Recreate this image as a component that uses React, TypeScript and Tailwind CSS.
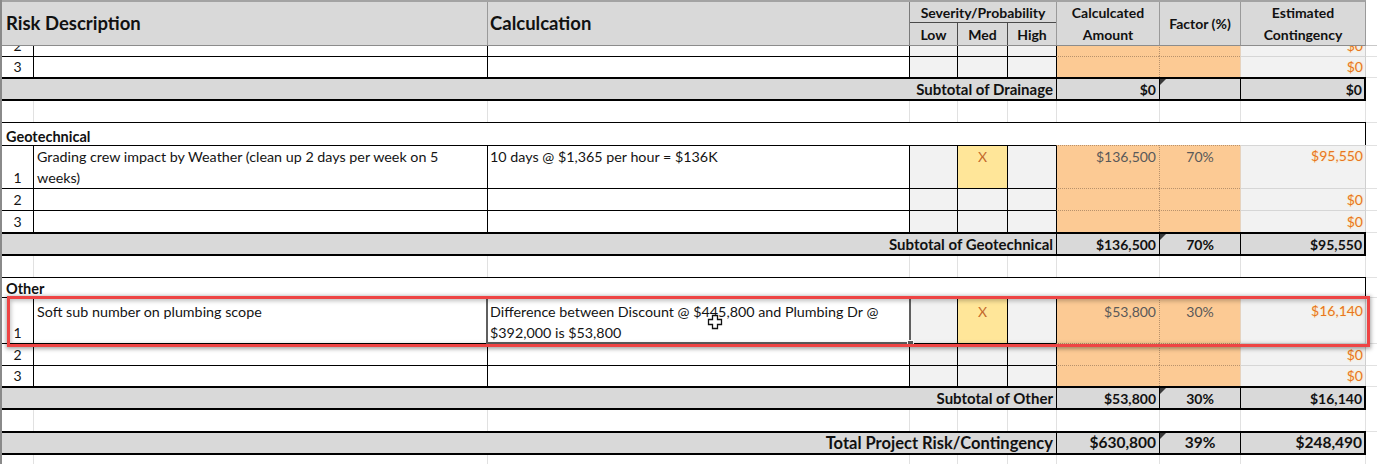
import React from "react";

function Edge() {
  return <div className="w-[2px] shrink-0 self-stretch bg-[#8a8a8a]" />;
}

function Rest({ top = true }: { top?: boolean }) {
  return <div className={`flex-1 bg-white ${top ? "border-t border-t-[#e1e1e1]" : ""}`} />;
}

type DataRowProps = {
  h: string;
  num: string;
  b?: React.ReactNode;
  c?: React.ReactNode;
  x?: boolean;
  calc?: string;
  fac?: string;
  est: string;
  pad?: string;
  noTop?: boolean;
  children?: React.ReactNode;
};

function DataRow({ h, num, b, c, x, calc, fac, est, pad, noTop, children }: DataRowProps) {
  const t = noTop ? "" : "border-t border-t-black";
  const align = pad ? `items-start ${pad}` : "items-center";
  const dotTop = noTop ? "" : "border-t border-t-[#b8926c] [border-top-style:dotted]";
  return (
    <div className={`flex ${h} shrink-0 text-[14px] leading-[21px] text-[#141414]`}>
      <Edge />
      <div className={`w-[31px] shrink-0 flex items-end justify-center bg-white ${t}`}>
        <span className="leading-[20px]">{num}</span>
      </div>
      <div className={`w-[454px] shrink-0 flex ${align} pl-[3px] bg-white border-l border-l-black ${t} whitespace-nowrap text-[14.3px]`}>
        <div>{b}</div>
      </div>
      <div className={`relative w-[422px] shrink-0 flex ${align} pl-[2px] bg-white border-l border-l-black ${t} whitespace-nowrap text-[14.3px]`}>
        <div>{c}</div>
        {children}
      </div>
      <div className={`w-[48px] shrink-0 bg-[#f2f2f2] border-l border-l-black ${t}`} />
      <div
        className={`w-[50px] shrink-0 flex justify-center ${align} ${x ? "bg-[#ffe699]" : "bg-[#f2f2f2]"} border-l border-l-black ${t} text-[#c46a2c]`}
      >
        {x ? "X" : ""}
      </div>
      <div className={`w-[49px] shrink-0 bg-[#f2f2f2] border-l border-l-black ${t}`} />
      <div className={`w-[103px] shrink-0 flex justify-end pr-[3px] ${align} bg-[#fcca94] border-l border-l-black ${dotTop} text-[#595959]`}>
        {calc}
      </div>
      <div
        className={`w-[81px] shrink-0 flex justify-center ${align} bg-[#fcca94] border-l border-l-[#b8926c] [border-left-style:dotted] ${dotTop} text-[#595959]`}
      >
        {fac}
      </div>
      <div
        className={`w-[126px] shrink-0 flex justify-end pr-[2px] ${pad ? `items-start ${pad}` : "items-end"} bg-[#f2f2f2] border-l border-l-[#e6d3bf] border-r border-r-[#cfcfcf] ${noTop ? "" : "border-t border-t-[#d6d6d6]"} text-[#e8761f] [text-shadow:0_0_2px_#ffe7a3]`}
      >
        <span className="leading-[20px]">{est}</span>
      </div>
      <Rest top={!noTop} />
    </div>
  );
}

function Tri() {
  return (
    <div className="absolute left-0 top-0 w-0 h-0 border-t-[6px] border-r-[6px] border-t-[#3a3a3a] border-r-transparent" />
  );
}

function SubRow({ label, calc, fac, est, big }: { label: string; calc: string; fac?: string; est: string; big?: boolean }) {
  const lsize = big ? "text-[16.5px]" : "text-[15px]";
  const vsize = big ? "text-[15.5px]" : "text-[14px]";
  return (
    <div className={`flex h-[24px] shrink-0 font-bold text-[#111]`}>
      <Edge />
      <div className={`w-[1054px] shrink-0 flex items-center justify-end pr-[3px] bg-[#d9d9d9] border-y-2 border-y-black ${lsize}`}>
        {label}
      </div>
      <div className={`w-[103px] shrink-0 flex items-center justify-end pr-[3px] bg-[#d9d9d9] border-y-2 border-y-black border-l border-l-black ${vsize}`}>
        {calc}
      </div>
      <div className={`relative w-[81px] shrink-0 flex items-center justify-center bg-[#d9d9d9] border-y-2 border-y-black border-l border-l-black ${vsize}`}>
        {fac}
        <Tri />
      </div>
      <div className={`w-[126px] shrink-0 flex items-center justify-end pr-[2px] bg-[#d9d9d9] border-y-2 border-y-black border-l border-l-black border-r-2 border-r-black ${vsize}`}>
        {est}
      </div>
      <Rest />
    </div>
  );
}

function Heading({ h, label }: { h: string; label: string }) {
  return (
    <div className={`flex ${h} shrink-0`}>
      <Edge />
      <div className="w-[1364px] shrink-0 flex items-end pl-[4px] bg-white border-t border-t-black border-r border-r-black font-bold text-[14.5px] leading-[16px] text-[#111]">
        {label}
      </div>
      <Rest />
    </div>
  );
}

function Blank({ h }: { h: string }) {
  const g = "border-l border-l-[#e1e1e1]";
  return (
    <div className={`flex ${h} shrink-0 bg-white`}>
      <Edge />
      <div className="w-[31px] shrink-0" />
      <div className={`w-[454px] shrink-0 ${g}`} />
      <div className={`w-[422px] shrink-0 ${g}`} />
      <div className={`w-[48px] shrink-0 ${g}`} />
      <div className={`w-[50px] shrink-0 ${g}`} />
      <div className={`w-[49px] shrink-0 ${g}`} />
      <div className={`w-[103px] shrink-0 ${g}`} />
      <div className={`w-[81px] shrink-0 ${g}`} />
      <div className={`w-[126px] shrink-0 ${g} border-r border-r-[#e1e1e1]`} />
      <div className="flex-1" />
    </div>
  );
}

function Header() {
  const hl = "border-l border-l-[#9a9a9a]";
  return (
    <div className="flex h-[46px] shrink-0 text-[#111] font-bold">
      <Edge />
      <div className="w-[1364px] shrink-0 flex bg-[#d9d9d9] border-t-2 border-t-[#a3a3a3] border-b border-b-[#8c8c8c] border-r border-r-[#9a9a9a]">
        <div className="w-[485px] shrink-0 flex items-center pl-[4px] text-[18.5px]">Risk Description</div>
        <div className={`w-[422px] shrink-0 flex items-center pl-[2px] text-[18.5px] ${hl}`}>Calculcation</div>
        <div className="w-[147px] shrink-0 flex flex-col border-l border-l-[#7a7a7a] text-[14px]">
          <div className="h-[21px] shrink-0 flex items-center justify-center border-b border-b-[#4a4a4a]">
            Severity/Probability
          </div>
          <div className="flex flex-1">
            <div className="w-[47px] shrink-0 flex items-center justify-center">Low</div>
            <div className="w-[50px] shrink-0 flex items-center justify-center border-l border-l-[#4a4a4a]">Med</div>
            <div className="w-[49px] shrink-0 flex items-center justify-center border-l border-l-[#4a4a4a]">High</div>
          </div>
        </div>
        <div className={`w-[103px] shrink-0 flex items-center justify-center text-center text-[14px] leading-[22px] ${hl}`}>
          Calculcated
          <br />
          Amount
        </div>
        <div className={`w-[81px] shrink-0 flex items-center justify-center text-[14px] ${hl}`}>Factor (%)</div>
        <div className={`w-[125px] shrink-0 flex items-center justify-center text-center text-[14px] leading-[22px] ${hl}`}>
          Estimated
          <br />
          Contingency
        </div>
      </div>
      <div className="flex-1 bg-white border-b border-b-[#c8c8c8]" />
    </div>
  );
}

function Cursor() {
  return (
    <svg className="absolute left-[219px] top-[16px] z-20" width="16" height="16" viewBox="0 0 16 16">
      <path d="M5.5 1.5 H10.5 V5.5 H14.5 V10.5 H10.5 V14.5 H5.5 V10.5 H1.5 V5.5 H5.5 Z" fill="#ffffff" stroke="#111" strokeWidth="1.3" />
    </svg>
  );
}

function Selection() {
  return (
    <>
      <div className="absolute -left-[2px] -top-[2px] -right-[2px] -bottom-[1px] border-2 border-[#5f5f5f] z-10" />
      <div className="absolute -right-[5px] -bottom-[4px] w-[7px] h-[7px] bg-[#5a5a5a] border border-white z-20" />
      <Cursor />
    </>
  );
}

export default function App() {
  return (
    <div className="relative w-[1377px] h-[464px] overflow-hidden bg-white flex flex-col [font-family:Lato,'Liberation_Sans',sans-serif]">
      <Header />
      <div className="h-[10px] shrink-0 overflow-hidden flex flex-col justify-end">
        <DataRow h="h-[24px]" num="2" est="$0" noTop />
      </div>
      <DataRow h="h-[21px]" num="3" est="$0" />
      <SubRow label="Subtotal of Drainage" calc="$0" est="$0" />
      <Blank h="h-[21px]" />
      <Heading h="h-[23px]" label="Geotechnical" />
      <DataRow
        h="h-[43px]"
        pad="pt-0"
        num="1"
        b={
          <>
            Grading crew impact by Weather (clean up 2 days per week on 5
            <br />
            weeks)
          </>
        }
        c="10 days @ $1,365 per hour = $136K"
        x
        calc="$136,500"
        fac="70%"
        est="$95,550"
      />
      <DataRow h="h-[22px]" num="2" est="$0" />
      <DataRow h="h-[22px]" num="3" est="$0" />
      <SubRow label="Subtotal of Geotechnical" calc="$136,500" fac="70%" est="$95,550" />
      <Blank h="h-[21px]" />
      <Heading h="h-[20px]" label="Other" />
      <DataRow
        h="h-[46px]"
        pad="pt-[3px]"
        num="1"
        b="Soft sub number on plumbing scope"
        c={
          <>
            Difference between Discount @ $445,800 and Plumbing Dr @
            <br />
            $392,000 is $53,800
          </>
        }
        x
        calc="$53,800"
        fac="30%"
        est="$16,140"
      >
        <Selection />
      </DataRow>
      <DataRow h="h-[22px]" num="2" est="$0" />
      <DataRow h="h-[21px]" num="3" est="$0" />
      <SubRow label="Subtotal of Other" calc="$53,800" fac="30%" est="$16,140" />
      <Blank h="h-[21px]" />
      <SubRow big label="Total Project Risk/Contingency" calc="$630,800" fac="39%" est="$248,490" />
      <Blank h="h-[12px]" />
      <div className="absolute left-[7px] top-[296px] w-[1363px] h-[51px] border-[3px] border-[#ee4444] z-30 shadow-[0_1px_4px_1px_rgba(0,0,0,0.35),inset_0_1px_4px_1px_rgba(0,0,0,0.25)] pointer-events-none" />
    </div>
  );
}
